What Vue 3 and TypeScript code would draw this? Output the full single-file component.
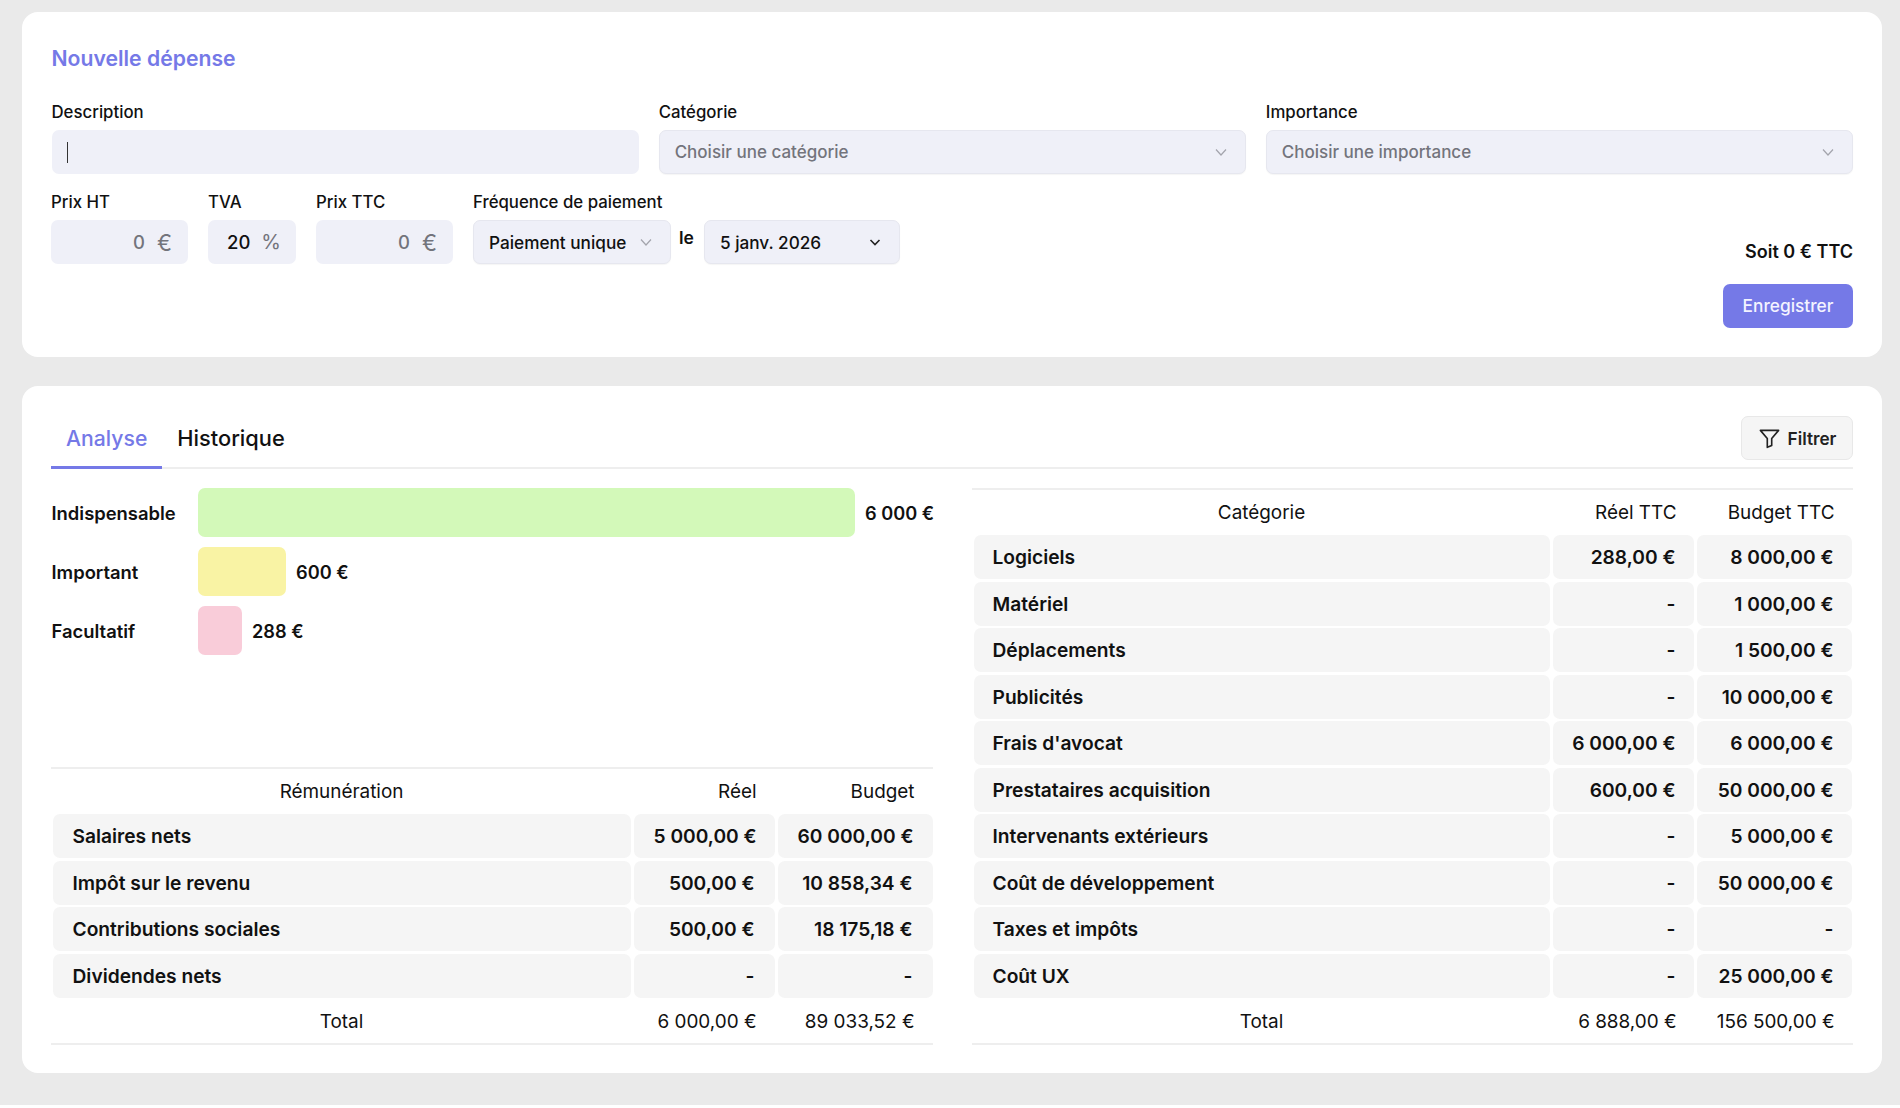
<script setup lang="ts">
interface Row { name: string; real: string; budget: string }
const fr = (s: string) => s.replace(/ /g, '\u00a0')

const bars = [
  { label: 'Indispensable', value: '6 000 €', width: 657, color: '#d3f9b9' },
  { label: 'Important', value: '600 €', width: 88, color: '#f9f3a4' },
  { label: 'Facultatif', value: '288 €', width: 44, color: '#f9ccd9' },
]
const pay: Row[] = [
  { name: 'Salaires nets', real: '5 000,00 €', budget: '60 000,00 €' },
  { name: 'Impôt sur le revenu', real: '500,00 €', budget: '10 858,34 €' },
  { name: 'Contributions sociales', real: '500,00 €', budget: '18 175,18 €' },
  { name: 'Dividendes nets', real: '-', budget: '-' },
]
const cats: Row[] = [
  { name: 'Logiciels', real: '288,00 €', budget: '8 000,00 €' },
  { name: 'Matériel', real: '-', budget: '1 000,00 €' },
  { name: 'Déplacements', real: '-', budget: '1 500,00 €' },
  { name: 'Publicités', real: '-', budget: '10 000,00 €' },
  { name: "Frais d'avocat", real: '6 000,00 €', budget: '6 000,00 €' },
  { name: 'Prestataires acquisition', real: '600,00 €', budget: '50 000,00 €' },
  { name: 'Intervenants extérieurs', real: '-', budget: '5 000,00 €' },
  { name: 'Coût de développement', real: '-', budget: '50 000,00 €' },
  { name: 'Taxes et impôts', real: '-', budget: '-' },
  { name: 'Coût UX', real: '-', budget: '25 000,00 €' },
]
</script>

<template>
  <div class="page">
    <section class="card form-card">
      <h2 class="title">Nouvelle dépense</h2>
      <div class="row-three">
        <div class="field">
          <label>Description</label>
          <div class="box"><span class="caret"></span></div>
        </div>
        <div class="field">
          <label>Catégorie</label>
          <div class="box select placeholder">
            <span>Choisir une catégorie</span>
            <svg class="chev" viewBox="0 0 14 14"><path d="M2 4.5 7 10l5-5.5" /></svg>
          </div>
        </div>
        <div class="field">
          <label>Importance</label>
          <div class="box select placeholder">
            <span>Choisir une importance</span>
            <svg class="chev" viewBox="0 0 14 14"><path d="M2 4.5 7 10l5-5.5" /></svg>
          </div>
        </div>
      </div>
      <div class="row-two">
        <div class="field w-price">
          <label>Prix HT</label>
          <div class="box num muted"><span>0</span><span class="unit">€</span></div>
        </div>
        <div class="field w-tva">
          <label>TVA</label>
          <div class="box num tva"><span>20</span><span class="unit">%</span></div>
        </div>
        <div class="field w-price">
          <label>Prix TTC</label>
          <div class="box num muted"><span>0</span><span class="unit">€</span></div>
        </div>
        <div class="field w-freq">
          <label>Fréquence de paiement</label>
          <div class="box select strong">
            <span>Paiement unique</span>
            <svg class="chev" viewBox="0 0 14 14"><path d="M2 4.5 7 10l5-5.5" /></svg>
          </div>
        </div>
        <span class="le">le</span>
        <div class="box select strong date">
          <span>5 janv. 2026</span>
          <svg class="chev dark" viewBox="0 0 14 14"><path d="M2.5 5 7 9.5 11.5 5" /></svg>
        </div>
        <div class="summary">
          <div class="soit">Soit 0 € TTC</div>
          <button class="save" type="button">Enregistrer</button>
        </div>
      </div>
    </section>

    <section class="card analysis-card">
      <div class="tabs">
        <div class="tab active">Analyse</div>
        <div class="tab other">Historique</div>
        <button class="filter" type="button">
          <svg viewBox="0 0 24 24" class="funnel"><path d="M2.5 3.5h19L14.3 12v7.2l-4.6 2V12z" /></svg>
          Filtrer
        </button>
      </div>

      <div class="columns">
        <div class="left">
          <div class="bars">
            <div v-for="b in bars" :key="b.label" class="bar-row">
              <span class="bar-label">{{ b.label }}</span>
              <span class="bar" :style="{ width: b.width + 'px', background: b.color }"></span>
              <span class="bar-value">{{ fr(b.value) }}</span>
            </div>
          </div>
          <div class="table pay">
            <div class="th head center">Rémunération</div>
            <div class="th head right">Réel</div>
            <div class="th head right">Budget</div>
            <template v-for="r in pay" :key="r.name">
              <div class="td">{{ r.name }}</div>
              <div class="td right">{{ fr(r.real) }}</div>
              <div class="td right">{{ fr(r.budget) }}</div>
            </template>
            <div class="th foot center">Total</div>
            <div class="th foot right">{{ fr('6 000,00 €') }}</div>
            <div class="th foot right">{{ fr('89 033,52 €') }}</div>
          </div>
        </div>

        <div class="table cat">
          <div class="th head center">Catégorie</div>
          <div class="th head right">Réel TTC</div>
          <div class="th head right">Budget TTC</div>
          <template v-for="r in cats" :key="r.name">
            <div class="td">{{ r.name }}</div>
            <div class="td right">{{ fr(r.real) }}</div>
            <div class="td right">{{ fr(r.budget) }}</div>
          </template>
          <div class="th foot center">Total</div>
          <div class="th foot right">{{ fr('6 888,00 €') }}</div>
          <div class="th foot right">{{ fr('156 500,00 €') }}</div>
        </div>
      </div>
    </section>
  </div>
</template>

<style>
html, body { margin: 0; background: #fff; }
</style>

<style scoped>
* { box-sizing: border-box; }
.page {
  height: 1105px;
  padding: 12px 18px 0 22px;
  background: #eaeaea;
  font-family: Inter, "Liberation Sans", sans-serif;
  font-size: 17px;
  color: #111;
  display: flex;
  flex-direction: column;
  gap: 29px;
}
.card {
  background: #fff;
  border-radius: 16px;
  padding: 30px 29px 29px;
}
.form-card { height: 345px; }
.analysis-card { height: 687px; }
.title {
  margin: 0 0 26px 0.5px;
  font-size: 21.2px;
  line-height: 33px;
  font-weight: 600;
  color: #7579e7;
}
.row-three {
  display: grid;
  grid-template-columns: repeat(3, 1fr);
  gap: 20px;
  margin: 0 0 17px 0.5px;
}
.field { display: flex; flex-direction: column; gap: 7px; }
label { line-height: 22px; font-weight: 500; font-size: 16.8px; }
.box {
  height: 44px;
  background: #eff0f8;
  border-radius: 7px;
  display: flex;
  align-items: center;
  padding: 0 16px;
  font-weight: 500;
  white-space: nowrap;
}
.caret { width: 1.5px; height: 21px; background: #333; margin-left: -1px; }
.select {
  justify-content: space-between;
  border: 1px solid #e6e7ef;
  box-shadow: 0 1px 1px rgba(0, 0, 0, 0.04);
  padding: 0 17px 0 15px;
}
.placeholder { color: #73747c; }
.strong { font-size: 17.2px; }
.chev { width: 14px; height: 14px; fill: none; stroke: #a3a4ac; stroke-width: 1.2; }
.chev.dark { stroke: #222; stroke-width: 1.6; }
.row-two { display: flex; align-items: flex-start; gap: 20px; }
.w-price { width: 137px; }
.w-tva { width: 88px; }
.w-freq { width: 198px; }
.num { justify-content: flex-end; gap: 12px; padding: 0 16px 0 0; font-size: 18.5px; }
.num.muted { color: #73747c; }
.unit { font-weight: 400; color: #73747c; font-size: 22.5px; }
.num.tva { gap: 11px; padding-right: 15px; }
.tva .unit { font-size: 20px; }
.le { margin: 36px -10px 0 -12px; line-height: 22px; font-weight: 600; font-size: 17.5px; }
.date { width: 196px; margin-top: 29px; }
.summary {
  margin-left: auto;
  padding-top: 50px;
  display: flex;
  flex-direction: column;
  align-items: flex-end;
  gap: 21px;
}
.soit { line-height: 22px; font-weight: 600; font-size: 18px; }
.save {
  width: 130px;
  height: 44px;
  padding: 0 0 2px;
  background: #7579e7;
  color: #f3f3ff;
  border: 0;
  border-radius: 7px;
  font: inherit;
  font-size: 17.3px;
  font-weight: 500;
}
.tabs {
  display: flex;
  align-items: flex-start;
  height: 53px;
  border-bottom: 2px solid #eee;
}
.tab {
  height: 53px;
  padding: 0 15px;
  line-height: 44px;
  font-size: 21.8px;
  font-weight: 500;
}
.tab.active { color: #7579e7; border-bottom: 3px solid #7579e7; font-size: 21.2px; }
.filter {
  margin-left: auto;
  width: 112px;
  height: 44px;
  display: flex;
  align-items: center;
  justify-content: center;
  gap: 7px;
  padding: 0;
  background: #f5f5f5;
  border: 1px solid #e8e8e8;
  border-radius: 7px;
  font: inherit;
  font-size: 17.2px;
  font-weight: 600;
  color: #222;
}
.funnel { width: 23px; height: 23px; fill: none; stroke: #222; stroke-width: 1.7; stroke-linejoin: round; }
.columns {
  margin-top: 19px;
  display: grid;
  grid-template-columns: 882px 881px;
  gap: 39px;
}
.left { display: flex; flex-direction: column; justify-content: space-between; }
.bars { display: flex; flex-direction: column; gap: 10px; }
.bar-row { display: flex; align-items: center; height: 49px; font-size: 18.4px; }
.bar-label { flex: none; width: 147px; font-weight: 600; padding-left: 0.5px; }
.bar { flex: none; height: 49px; border-radius: 7px; }
.bar-value { margin-left: 10px; font-weight: 600; white-space: nowrap; font-size: 18.2px; }
.table {
  display: grid;
  column-gap: 3px;
  row-gap: 2.5px;
  padding: 2.5px 1.5px;
  border-top: 2px solid #eee;
  border-bottom: 2px solid #eee;
  align-content: start;
}
.pay { grid-template-columns: 578px 141px 155px; }
.cat { grid-template-columns: 576px 141px 155px; }
.th {
  height: 40px;
  line-height: 40px;
  padding: 0 20px;
  white-space: nowrap;
  font-size: 18.9px;
  font-weight: 400;
}
.th.head { line-height: 39px; }
.th.foot { line-height: 43px; }
.td {
  height: 44px;
  line-height: 44px;
  padding: 0 20px;
  background: #f5f5f5;
  border-radius: 7px;
  font-size: 19.2px;
  font-weight: 600;
  white-space: nowrap;
}
.center { text-align: center; }
.right { text-align: right; }
.pay .th.right { padding-right: 18px; }
.cat .th.right { padding-right: 17px; }
.cat .td { padding-left: 19px; }
.cat .td.right { padding-right: 18px; }
</style>
